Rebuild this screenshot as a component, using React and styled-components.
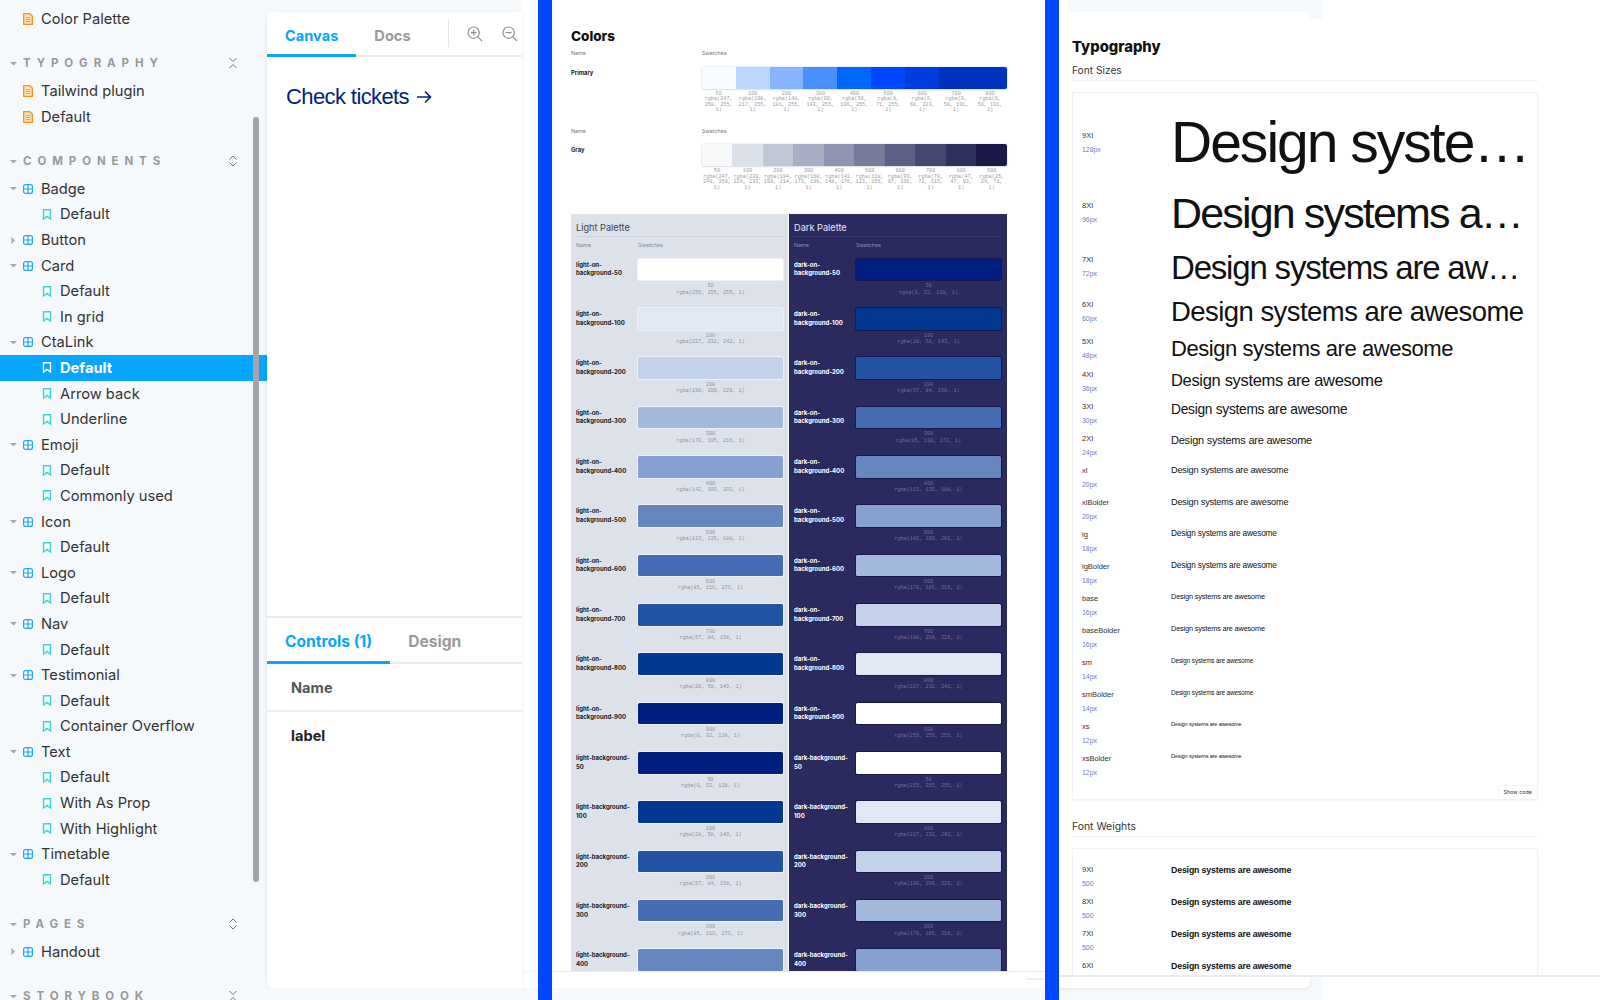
import React from 'react'
import styled, { createGlobalStyle } from 'styled-components'

const pageBg = '#f6f9fc'
const accent = '#06a5ff'
const sans = '"Inter", "Liberation Sans", sans-serif'
const grotesk = '"Liberation Sans", Arial, sans-serif'

const GlobalStyle = createGlobalStyle`
  html, body {
    margin: 0;
    background: #fff;
    font-family: ${sans};
  }
  * {
    box-sizing: border-box;
  }
`

const Page = styled.div`
  display: flex;
  width: 1600px;
  height: 1000px;
  overflow: hidden;
  background: #fff;
`
const BlueBar = styled.div`
  flex: 0 0 14px;
  background: #0047ff;
`

/* sidebar */
const Sidebar = styled.nav`
  position: relative;
  flex: 0 0 267px;
  height: 1000px;
  overflow: hidden;
  padding-top: 6.25px;
  background: ${pageBg};
`
const Scrollbar = styled.div`
  position: absolute;
  left: 253px;
  top: 117px;
  width: 6px;
  height: 765px;
  border-radius: 3px;
  background: #a2a5a9;
`
const Section = styled.div`
  display: flex;
  align-items: center;
  height: 20px;
  margin: 21.5px 0 5px;
  padding: 0 29px 0 10px;
  color: #999;
  font-size: 11.5px;
  font-weight: 700;
  letter-spacing: 5.9px;
`
const SectionName = styled.span`
  flex: 1;
  margin-left: 8px;
`
const Row = styled.div`
  display: flex;
  align-items: center;
  gap: 8px;
  height: 25.6px;
  padding-left: ${p => (p.$child ? 42 : p.$caret ? 10 : 23)}px;
  background: ${p => (p.$selected ? accent : 'transparent')};
  color: ${p => (p.$selected ? '#fff' : '#333')};
  font-size: 14.7px;
  font-weight: ${p => (p.$selected ? 700 : 400)};
`
const CaretBox = styled.span`
  display: flex;
  justify-content: center;
  width: 7px;
  margin-right: -2px;
`

const Caret = ({ open }) => (
  <CaretBox>
    <svg width="7" height="7" viewBox="0 0 7 7">
      <path d={open ? 'M0 2h7L3.5 5.5z' : 'M1.5 0v7L5 3.5z'} fill="#a8a8a8" />
    </svg>
  </CaretBox>
)
const DocIcon = () => (
  <svg width="10" height="12" viewBox="0 0 10 12">
    <path d="M.7.7h6l2.6 2.4v8.2H.7z" fill="#ffe3bf" stroke="#ff8a14" strokeWidth="1.3" />
    <path d="M2.5 4.5h5M2.5 6.5h5M2.5 8.5h5" stroke="#ff9a33" strokeWidth=".9" />
  </svg>
)
const ComponentIcon = () => (
  <svg width="10" height="10" viewBox="0 0 10 10">
    <rect x=".6" y=".6" width="8.8" height="8.8" rx="2" fill="none" stroke="#1ea7fd" strokeWidth="1.2" />
    <path d="M5 .6v8.8M.6 5h8.8" stroke="#1ea7fd" strokeWidth="1.2" />
  </svg>
)
const BookmarkIcon = ({ selected }) => (
  <svg width="10" height="11" viewBox="0 0 10 11">
    <path d="M1.5.8h7v9.2L5 7.4 1.5 10z" fill="none" stroke={selected ? '#fff' : '#37d5d3'} strokeWidth="1.4" />
  </svg>
)
const FoldIcon = ({ expand }) => (
  <svg width="10" height="12" viewBox="0 0 10 12">
    <path
      d={expand ? 'M1.5 4.5 5 1l3.5 3.5M1.5 7.5 5 11l3.5-3.5' : 'M1.5 1 5 4.5 8.5 1M1.5 11 5 7.5 8.5 11'}
      fill="none"
      stroke="#777"
      strokeWidth="1"
    />
  </svg>
)

const tree = [
  ['Badge', ['Default']],
  ['Button', null],
  ['Card', ['Default', 'In grid']],
  ['CtaLink', ['Default', 'Arrow back', 'Underline']],
  ['Emoji', ['Default', 'Commonly used']],
  ['Icon', ['Default']],
  ['Logo', ['Default']],
  ['Nav', ['Default']],
  ['Testimonial', ['Default', 'Container Overflow']],
  ['Text', ['Default', 'With As Prop', 'With Highlight']],
  ['Timetable', ['Default']],
]

const SectionHead = ({ name, expand }) => (
  <Section>
    <Caret open />
    <SectionName>{name}</SectionName>
    <FoldIcon expand={expand} />
  </Section>
)

const Tree = ({ items }) =>
  items.map(([name, kids]) => (
    <React.Fragment key={name}>
      <Row $caret>
        <Caret open={!!kids} />
        <ComponentIcon />
        {name}
      </Row>
      {kids &&
        kids.map(kid => {
          const selected = name === 'CtaLink' && kid === 'Default'
          return (
            <Row $child $selected={selected} key={kid}>
              <BookmarkIcon selected={selected} />
              {kid}
            </Row>
          )
        })}
    </React.Fragment>
  ))

const DocRow = ({ children }) => (
  <Row>
    <DocIcon />
    {children}
  </Row>
)

const SideNav = () => (
  <Sidebar>
    <DocRow>Color Palette</DocRow>
    <SectionHead name="TYPOGRAPHY" />
    <DocRow>Tailwind plugin</DocRow>
    <DocRow>Default</DocRow>
    <SectionHead name="COMPONENTS" expand />
    <Tree items={tree} />
    <SectionHead name="PAGES" expand />
    <Tree items={[['Handout', null]]} />
    <SectionHead name="STORYBOOK" />
    <Scrollbar />
  </Sidebar>
)

/* storybook main card */
const MainColumn = styled.div`
  position: relative;
  display: flex;
  flex: 0 0 271px;
  flex-direction: column;
  height: 1000px;
  &::after {
    content: '';
    position: absolute;
    left: 255px;
    right: 0;
    top: 971px;
    height: 1px;
    background: #eef2f6;
  }
`
const CardBackdrop = styled.div`
  flex: 0 0 988px;
  width: 255px;
  padding-top: 12px;
  background: ${pageBg};
`
const BottomBand = styled.div`
  flex: 1;
  background: ${pageBg};
`
const MainCard = styled.div`
  display: flex;
  flex-direction: column;
  height: 100%;
  overflow: hidden;
  border-radius: 5px 0 0 5px;
  background: #fff;
  box-shadow: 0 1px 4px rgba(0, 0, 0, 0.08);
`
const TabBar = styled.div`
  display: flex;
  align-items: stretch;
  flex: 0 0 ${p => p.$height}px;
  border-bottom: 2px solid #e8ebee;
`
const Tab = styled.div`
  display: flex;
  align-items: center;
  flex: none;
  height: calc(100% + 2px);
  padding: ${p => p.$lift}px 18px 0;
  border-bottom: 3px solid ${p => (p.$active ? accent : 'transparent')};
  color: ${p => (p.$active ? accent : '#999')};
  font-size: ${p => p.$size}px;
  font-weight: 700;
`
const ToolDivider = styled.div`
  flex: none;
  align-self: center;
  width: 1px;
  height: 27px;
  margin: 0 18px 0 19px;
  background: #e3e5e8;
`
const ToolIcon = styled.div`
  display: flex;
  align-items: center;
  flex: none;
  margin-right: 19px;
`
const Preview = styled.div`
  flex: 1;
  padding: 27px 19px;
`
const CtaLink = styled.a`
  display: inline-flex;
  align-items: center;
  gap: 8px;
  color: #001f80;
  font-family: ${grotesk};
  font-size: 22px;
  letter-spacing: -0.6px;
  line-height: 26px;
`
const Addons = styled.div`
  flex: 0 0 372px;
  border-top: 2px solid #e8ebee;
  display: flex;
  flex-direction: column;
`
const ArgCell = styled.div`
  display: flex;
  align-items: center;
  height: ${p => p.$height}px;
  padding: ${p => (p.$line ? 1 : 0)}px 0 0 24px;
  border-bottom: ${p => (p.$line ? '2px solid #eceef0' : 'none')};
  color: ${p => (p.$head ? '#555' : '#222')};
  font-size: 14.6px;
  font-weight: 700;
`

const ZoomIcon = ({ minus }) => (
  <svg width="16" height="16" viewBox="0 0 18 18" fill="none" stroke="#8c8c8c" strokeWidth="1.3">
    <circle cx="7.5" cy="7.5" r="6.4" />
    <path d="M12.2 12.2 17 17" />
    <path d={minus ? 'M4.3 7.5h6.4' : 'M4.3 7.5h6.4M7.5 4.3v6.4'} />
  </svg>
)

const Storybook = () => (
  <MainColumn>
    <CardBackdrop>
      <MainCard>
        <TabBar $height={45}>
          <Tab $active $lift={5} $size={14.6}>
            Canvas
          </Tab>
          <Tab $lift={5} $size={14.6}>
            Docs
          </Tab>
          <ToolDivider />
          <ToolIcon>
            <ZoomIcon />
          </ToolIcon>
          <ToolIcon>
            <ZoomIcon minus />
          </ToolIcon>
        </TabBar>
        <Preview>
          <CtaLink>
            Check tickets
            <svg width="15" height="14" viewBox="0 0 15 14" fill="none" stroke="#001f80" strokeWidth="1.6">
              <path d="M0 7h13.5M8 1.5 13.5 7 8 12.5" />
            </svg>
          </CtaLink>
        </Preview>
        <Addons>
          <TabBar $height={46}>
            <Tab $active $lift={4} $size={15.6}>
              Controls (1)
            </Tab>
            <Tab $lift={4} $size={15.6}>
              Design
            </Tab>
          </TabBar>
          <ArgCell $height={48} $line $head>
            Name
          </ArgCell>
          <ArgCell $height={47}>label</ArgCell>
        </Addons>
      </MainCard>
    </CardBackdrop>
    <BottomBand />
  </MainColumn>
)

/* colors sheet */
const ColorsColumn = styled.div`
  display: flex;
  flex: 0 0 493px;
  flex-direction: column;
  min-width: 0;
  height: 1000px;
`
const ColorsSheet = styled.div`
  flex: 0 0 972px;
  overflow: hidden;
  padding: 28px 38px 0 19px;
  border-bottom: 1px solid #e8edf2;
`
const SheetFooter = styled.div`
  flex: 0 0 16px;
  display: flex;
  justify-content: flex-end;
  padding-top: 6px;
  &::after {
    content: '';
    width: 19px;
    height: 2px;
    background: #eef2f6;
  }
`
const SheetTitle = styled.h2`
  margin: 0;
  color: #111;
  font-family: ${sans};
  font-size: ${p => p.$size}px;
  font-weight: 800;
  line-height: 16px;
`
const PaletteGrid = styled.div`
  display: grid;
  grid-template-columns: 130.7px minmax(0, 1fr);
  margin-top: ${p => p.$top}px;
`
const ColHead = styled.div`
  height: 17.6px;
  color: #777;
  font-size: 5.4px;
  line-height: 8px;
`
const RowName = styled.div`
  padding-top: 2px;
  color: #222;
  font-size: 5.8px;
  font-weight: 700;
  line-height: 8px;
`
const SwatchStrip = styled.div`
  display: flex;
  overflow: hidden;
  height: 22px;
  border-radius: 2px;
  box-shadow: 0 0 0 1px rgba(10, 30, 90, 0.06), 0 1px 2px rgba(10, 30, 90, 0.1);
`
const StripCell = styled.div`
  flex: 1;
  background: ${p => p.$color};
`
const CaptionRow = styled.div`
  display: flex;
`
const Caption = styled.div`
  flex: 1 1 0;
  min-width: 0;
  padding: 3px 1px 0;
  color: ${p => p.$color || '#9a9ca3'};
  font-family: 'Liberation Mono', monospace;
  font-size: 5.2px;
  line-height: ${p => p.$leading || 5.6}px;
  text-align: center;
`
const PaletteSplit = styled.div`
  display: grid;
  grid-template-columns: 217px 218px;
  margin-top: 22px;
  gap: 1px;
`
const PaletteSide = styled.div`
  height: 760px;
  padding: 0 5px;
  background: ${p => (p.$dark ? '#2b2a5e' : '#dce1ea')};
  color: ${p => (p.$dark ? '#fff' : '#222')};
`
const SideTitle = styled.div`
  height: 23px;
  padding-top: 7px;
  border-bottom: 1px solid ${p => (p.$dark ? '#393a6c' : '#d0d6e1')};
  color: ${p => (p.$dark ? '#e8e9f3' : '#444')};
  font-size: 9.2px;
  line-height: 14px;
`
const SideHead = styled.div`
  display: grid;
  grid-template-columns: 62px 1fr;
  height: 22px;
  padding-top: 4px;
  color: ${p => (p.$dark ? '#8d8db3' : '#838a9a')};
  font-size: 5.4px;
  line-height: 8px;
`
const ToneRow = styled.div`
  display: grid;
  grid-template-columns: 62px 145px;
  height: 49.33px;
`
const ToneName = styled.div`
  padding: 2.2px 4px 0 0;
  font-size: 6px;
  font-weight: 700;
  line-height: 8.6px;
  overflow-wrap: anywhere;
`
const ToneBlock = styled.div`
  height: 21.6px;
  border-radius: 1.5px;
  background: ${p => p.$color};
  box-shadow: 0 0 0 1px ${p => (p.$dark ? 'rgba(10, 10, 60, 0.55)' : 'rgba(255, 255, 255, 0.55)')};
`

const primary = [
  ['50', '#f7faff', 'rgba(247, 250, 255, 1)'],
  ['100', '#bcd7ff', 'rgba(198, 217, 255, 1)'],
  ['200', '#86b4ff', 'rgba(148, 181, 255, 1)'],
  ['300', '#4a90ff', 'rgba(99, 143, 255, 1)'],
  ['400', '#0068ff', 'rgba(50, 106, 255, 1)'],
  ['500', '#0047ff', 'rgba(0, 71, 255, 1)'],
  ['600', '#003cdf', 'rgba(0, 60, 223, 1)'],
  ['700', '#0032bf', 'rgba(0, 50, 191, 1)'],
  ['800', '#0032bf', 'rgba(0, 50, 191, 1)'],
]
const gray = [
  ['50', '#f7f8fa', 'rgba(247, 248, 250, 1)'],
  ['100', '#dce0e9', 'rgba(220, 224, 233, 1)'],
  ['200', '#c2c7d6', 'rgba(194, 199, 214, 1)'],
  ['300', '#a8adc4', 'rgba(168, 173, 196, 1)'],
  ['400', '#8f94b0', 'rgba(143, 148, 176, 1)'],
  ['500', '#767b9c', 'rgba(118, 123, 156, 1)'],
  ['600', '#5d6188', 'rgba(93, 97, 136, 1)'],
  ['700', '#464873', 'rgba(70, 72, 115, 1)'],
  ['800', '#2f2f5d', 'rgba(47, 47, 93, 1)'],
  ['900', '#191847', 'rgba(25, 24, 71, 1)'],
]
// shown colour and the value printed under it
const tones = [
  ['50', '#ffffff', 'rgba(255, 255, 255, 1)'],
  ['100', '#e1e8f3', 'rgba(227, 232, 242, 1)'],
  ['200', '#c3d2e8', 'rgba(198, 209, 229, 1)'],
  ['300', '#a3b9dc', 'rgba(170, 185, 216, 1)'],
  ['400', '#86a0cf', 'rgba(142, 160, 202, 1)'],
  ['500', '#6586bf', 'rgba(113, 135, 188, 1)'],
  ['600', '#466db3', 'rgba(85, 110, 173, 1)'],
  ['700', '#2253a4', 'rgba(57, 84, 158, 1)'],
  ['800', '#003892', 'rgba(28, 58, 143, 1)'],
  ['900', '#001f80', 'rgba(0, 32, 128, 1)'],
]
const reversed = tones.map(([step], i) => [step, tones[9 - i][1], tones[9 - i][2]])

const Palette = ({ name, swatches, top }) => (
  <PaletteGrid $top={top}>
    <ColHead>Name</ColHead>
    <ColHead>Swatches</ColHead>
    <RowName>{name}</RowName>
    <div>
      <SwatchStrip>
        {swatches.map(([step, color]) => (
          <StripCell key={step} $color={color} />
        ))}
      </SwatchStrip>
      <CaptionRow>
        {swatches.map(([step, , value]) => (
          <Caption key={step}>
            {step}
            <br />
            {value}
          </Caption>
        ))}
      </CaptionRow>
    </div>
  </PaletteGrid>
)

// the sheet is cut off right under the last swatch, so that one has no caption
const ToneList = ({ prefix, list, dark, cutLast }) =>
  list.map(([step, color, value], i) => (
    <ToneRow key={prefix + step}>
      <ToneName>
        {prefix}-{step}
      </ToneName>
      <div>
        <ToneBlock $color={color} $dark={dark} />
        {!(cutLast && i === list.length - 1) && (
          <Caption $leading={6.3} $color={dark ? '#6f6f9c' : '#8f94a3'}>
            {step}
            <br />
            {value}
          </Caption>
        )}
      </div>
    </ToneRow>
  ))

const PaletteColumn = ({ title, dark, on }) => (
  <PaletteSide $dark={dark}>
    <SideTitle $dark={dark}>{title}</SideTitle>
    <SideHead $dark={dark}>
      <span>Name</span>
      <span>Swatches</span>
    </SideHead>
    <ToneList prefix={`${on}-on-background`} list={dark ? reversed : tones} dark={dark} />
    <ToneList prefix={`${on}-background`} list={(dark ? tones : reversed).slice(0, 5)} dark={dark} cutLast />
  </PaletteSide>
)

const Colors = () => (
  <ColorsColumn>
    <ColorsSheet>
      <SheetTitle $size={13.5}>Colors</SheetTitle>
      <Palette name="Primary" swatches={primary} top={5} />
      <Palette name="Gray" swatches={gray} top={12.7} />
      <PaletteSplit>
        <PaletteColumn title="Light Palette" on="light" />
        <PaletteColumn title="Dark Palette" on="dark" dark />
      </PaletteSplit>
    </ColorsSheet>
    <SheetFooter />
    <BottomBand />
  </ColorsColumn>
)

/* typography sheet */
const TypeColumn = styled.div`
  display: flex;
  flex: 1;
  flex-direction: column;
  min-width: 0;
  height: 1000px;
`
const TopScrap = styled.div`
  flex: 0 0 19px;
  width: 254px;
  margin-left: 9px;
  padding: 12px 12px 0 0;
  background: ${pageBg};
  &::after {
    content: '';
    display: block;
    height: 7px;
    border-radius: 0 5px 0 0;
    background: #fff;
  }
`
const BottomScrap = styled.div`
  flex: 1;
  width: 263px;
  padding: 0 12px 12px 0;
  background: ${pageBg};
  &::after {
    content: '';
    display: block;
    height: 100%;
    border-radius: 0 0 5px 0;
    background: #fff;
    box-shadow: 0 1px 3px rgba(0, 0, 0, 0.08);
  }
`
const TypeSheet = styled.div`
  flex: 0 0 958px;
  overflow: hidden;
  padding: 20px 62px 0 13px;
  border-bottom: 2px solid #e8edf2;
`
const SubHead = styled.div`
  height: ${p => p.$height}px;
  padding-top: ${p => p.$pad}px;
  border-bottom: 1px solid #f0f1f3;
  color: #333;
  font-size: ${p => p.$size}px;
  line-height: 12px;
`
const SpecCard = styled.div`
  position: relative;
  margin-top: 11px;
  padding: ${p => p.$pad}px 9px 0;
  height: ${p => p.$height}px;
  border: 1px solid #f0f1f3;
  border-radius: 2px;
  box-shadow: 0 1px 2px rgba(0, 0, 0, 0.05);
`
const ShowCode = styled.div`
  position: absolute;
  right: 0;
  bottom: 0;
  padding: 3px 5px;
  border-radius: 2px 0 0 0;
  border: 1px solid #f0f1f3;
  border-width: 1px 0 0 1px;
  color: #333;
  font-size: 5.4px;
  line-height: 7px;
`
const SpecRow = styled.div`
  display: flex;
  align-items: flex-start;
  height: ${p => p.$height}px;
`
const SpecMeta = styled.div`
  flex: 0 0 89px;
  height: 28px;
`
const SpecName = styled.div`
  height: 14px;
  color: #333;
  font-family: ${grotesk};
  font-size: 7.5px;
  line-height: 14px;
`
const SpecValue = styled(SpecName)`
  color: #5b82c8;
  font-size: 6.9px;
`
const SampleCell = styled.div`
  display: flex;
  flex: 0 0 362px;
  min-width: 0;
  height: 28px;
  align-items: ${p => (p.$center ? 'center' : 'flex-start')};
`
const Sample = styled.div`
  overflow: hidden;
  width: 100%;
  color: #111;
  font-family: ${grotesk};
  font-size: ${p => p.$size}px;
  letter-spacing: ${p => p.$track}em;
  line-height: 1.5;
  text-overflow: ellipsis;
  white-space: nowrap;
`
const WeightSample = styled(Sample)`
  font-size: 8.8px;
  font-weight: 700;
  letter-spacing: -0.02em;
  line-height: 14px;
`

// name, css px, rendered size, row height, centred on the label, tracking
const sizes = [
  ['9XI', 128, 57, 70, true, -0.035],
  ['8XI', 96, 43, 54.3, true, -0.043],
  ['7XI', 72, 33, 44.4, true, -0.036],
  ['6XI', 60, 27.5, 37, true],
  ['5XI', 48, 22, 33.3, true],
  ['4XI', 36, 16.5, 32],
  ['3XI', 30, 13.75, 32],
  ['2XI', 24, 11, 32],
  ['xl', 20, 9.16, 32],
  ['xlBolder', 20, 9.16, 32],
  ['lg', 18, 8.25, 32],
  ['lgBolder', 18, 8.25, 32],
  ['base', 16, 7.33, 32],
  ['baseBolder', 16, 7.33, 32],
  ['sm', 14, 6.41, 32],
  ['smBolder', 14, 6.41, 32],
  ['xs', 12, 5.5, 32],
  ['xsBolder', 12, 5.5, 32],
]
const weights = ['9XI', '8XI', '7XI', '6XI']
const sampleText = 'Design systems are awesome'

const Typography = () => (
  <TypeColumn>
    <TopScrap />
    <TypeSheet>
      <SheetTitle $size={14.8}>Typography</SheetTitle>
      <SubHead $height={26} $pad={9} $size={10.2}>
        Font Sizes
      </SubHead>
      <SpecCard $pad={36} $height={708}>
        {sizes.map(([name, px, size, height, center, track = -0.02]) => (
          <SpecRow key={name} $height={height}>
            <SpecMeta>
              <SpecName>{name}</SpecName>
              <SpecValue>{px}px</SpecValue>
            </SpecMeta>
            <SampleCell $center={center}>
              <Sample $size={size} $track={track}>
                {sampleText}
              </Sample>
            </SampleCell>
          </SpecRow>
        ))}
        <ShowCode>Show code</ShowCode>
      </SpecCard>
      <SubHead $height={37} $pad={21} $size={10.4}>
        Font Weights
      </SubHead>
      <SpecCard $pad={13.5} $height={200}>
        {weights.map(name => (
          <SpecRow key={name} $height={32}>
            <SpecMeta>
              <SpecName>{name}</SpecName>
              <SpecValue>500</SpecValue>
            </SpecMeta>
            <SampleCell>
              <WeightSample>{sampleText}</WeightSample>
            </SampleCell>
          </SpecRow>
        ))}
      </SpecCard>
    </TypeSheet>
    <BottomScrap />
  </TypeColumn>
)

export default function App() {
  return (
    <Page>
      <GlobalStyle />
      <SideNav />
      <Storybook />
      <BlueBar />
      <Colors />
      <BlueBar />
      <Typography />
    </Page>
  )
}
